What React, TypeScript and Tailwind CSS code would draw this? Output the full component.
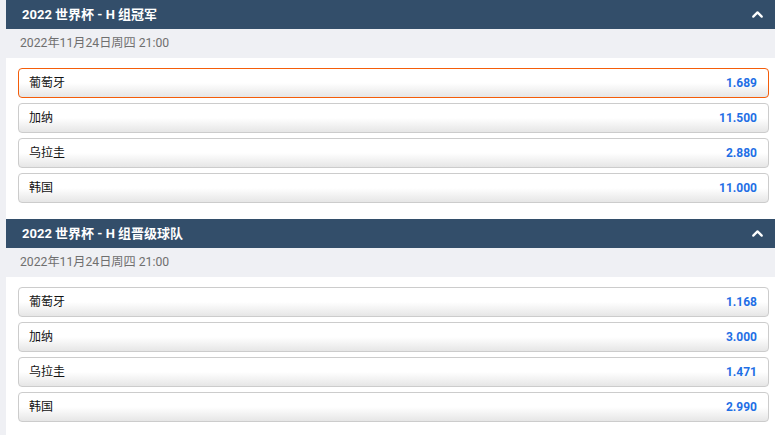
import { ChevronUp } from "lucide-react";

type Pick = { name: string; odds: string; selected?: boolean };

const markets: { title: string; date: string; picks: Pick[] }[] = [
  {
    title: "2022 世界杯 - H 组冠军",
    date: "2022年11月24日周四 21:00",
    picks: [
      { name: "葡萄牙", odds: "1.689", selected: true },
      { name: "加纳", odds: "11.500" },
      { name: "乌拉圭", odds: "2.880" },
      { name: "韩国", odds: "11.000" },
    ],
  },
  {
    title: "2022 世界杯 - H 组晋级球队",
    date: "2022年11月24日周四 21:00",
    picks: [
      { name: "葡萄牙", odds: "1.168" },
      { name: "加纳", odds: "3.000" },
      { name: "乌拉圭", odds: "1.471" },
      { name: "韩国", odds: "2.990" },
    ],
  },
];

function Market({ title, date, picks }: (typeof markets)[number]) {
  return (
    <section>
      <div className="flex h-[29px] items-center justify-between bg-[#334e6a] pl-4 pr-[9px] text-[13px] font-bold text-white">
        <span>{title}</span>
        <ChevronUp size={17} strokeWidth={3.2} />
      </div>
      <div className="flex h-[29px] items-center bg-[#eff0f4] pl-[14px] text-[12.2px] text-[#6f6f6f]">
        {date}
      </div>
      <div className="flex flex-col gap-[5px] bg-white pb-[16px] pl-3 pr-[6px] pt-[10px]">
        {picks.map((p) => (
          <div
            key={p.name}
            className={
              "flex h-[30px] items-center justify-between rounded-[4px] border bg-gradient-to-b from-white from-50% to-[#e6e6e6] pl-[10px] pr-[11px] text-[12px] " +
              (p.selected ? "border-[#f45d0a]" : "border-[#cccccc]")
            }
          >
            <span className="text-[#111]">{p.name}</span>
            <span className="font-bold text-[#1f6fe5]">{p.odds}</span>
          </div>
        ))}
      </div>
    </section>
  );
}

export default function App() {
  return (
    <div
      className="h-[435px] w-[775px] overflow-hidden bg-[#eff0f4] pl-[6px]"
      style={{ fontFamily: 'Roboto, "Noto Sans CJK SC", sans-serif' }}
    >
      {markets.map((m) => (
        <Market key={m.title} {...m} />
      ))}
    </div>
  );
}
